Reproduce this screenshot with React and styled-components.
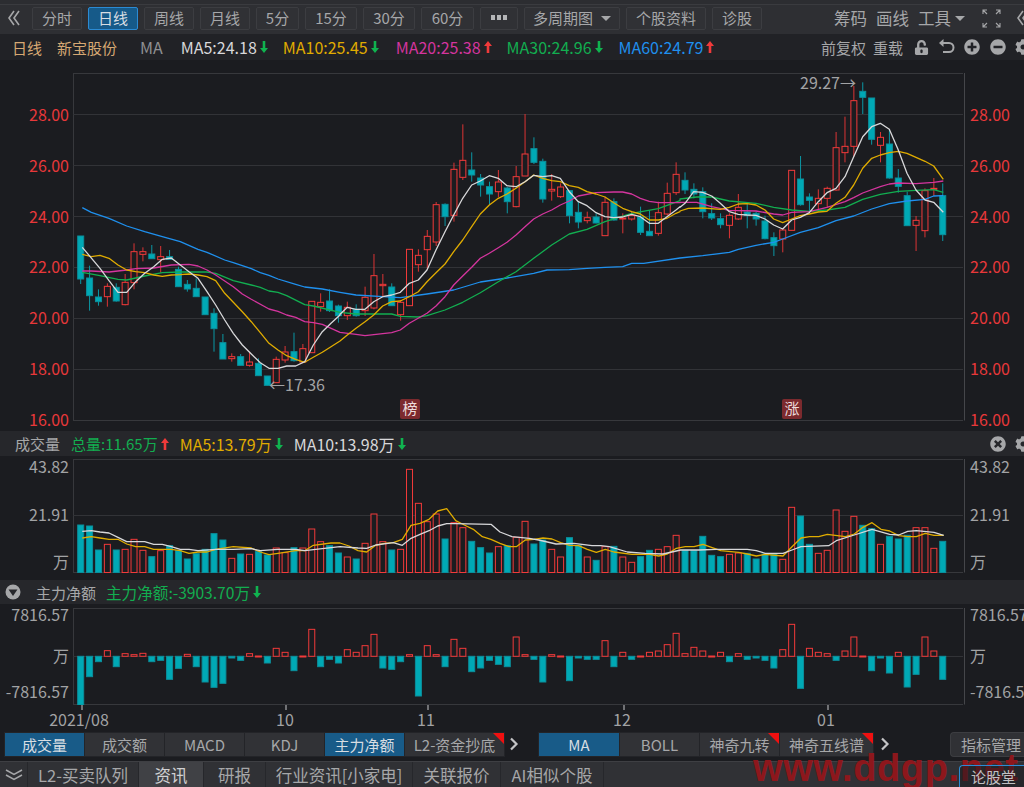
import React from 'react';
import styled, { createGlobalStyle } from 'styled-components';
import { FaCog, FaPlusCircle, FaMinusCircle, FaTimesCircle, FaUnlockAlt } from 'react-icons/fa';

const FONT = '"Noto Sans CJK SC", "Noto Sans", sans-serif';
const RED = '#f23a3a';
const TEAL = '#00a9b5';
const C = { ma5: '#d8d8da', ma10: '#e0ac00', ma20: '#d4359e', ma30: '#12ae50', ma60: '#1f90ee' };

const Global = createGlobalStyle`
  html, body { margin: 0; padding: 0; background: #1b1c20; overflow: hidden; }
  * { box-sizing: border-box; }
`;

const Page = styled.div`
  position: relative; width: 1024px; height: 787px; overflow: hidden;
  display: flex; flex-direction: column; background: #1b1c20;
  font-family: ${FONT}; font-size: 15px; color: #a6a7a9;
`;
const TopStrip = styled.div`height: 5px; background: #2c2d31; border-bottom: 1px solid #3a3b3f;`;
const Toolbar = styled.div`
  height: 29px; background: #2e2f33; display: flex; align-items: center; gap: 6px; padding: 0 0 3px 8px;
`;
const Chevrons = styled.svg`flex: none; display: block;`;
const BackChevron = styled.span`display: flex; margin-right: 6px;`;
const ToolButton = styled.button`
  flex: none; height: 23px; width: ${p => p.$w}px; padding: 0; font: inherit; line-height: 20px;
  display: flex; align-items: center; justify-content: center; gap: 8px;
  color: ${p => (p.$active ? '#d7dde2' : '#a6a7a9')};
  background: ${p => (p.$active ? '#165a89' : '#303135')};
  border: 1px solid ${p => (p.$active ? '#2b8bd4' : '#3c3d41')};
  border-radius: 2px;
`;
const Caret = styled.span`
  width: 0; height: 0; border-left: 5px solid transparent; border-right: 5px solid transparent;
  border-top: 5px solid #a6a7a9;
`;
const ToolRight = styled.div`
  margin-left: auto; display: flex; align-items: center; gap: 9px; font-size: 16.5px;
`;
const ToolLink = styled.span`display: flex; align-items: center; gap: 4px;`;
const FullSlot = styled.span`margin-left: 8px; display: flex;`;
const CutChevron = styled.span`margin-left: 7px; display: flex; width: 7px; overflow: hidden;`;
const Legend = styled.div`
  height: 26px; background: #212226; display: flex; align-items: center; padding-left: 12px; white-space: nowrap;
`;
const Tag = styled.span`
  color: ${p => p.$c}; margin-left: ${p => p.$ml || 0}px; flex: none; font-size: ${p => p.$fs || 15}px;
  display: inline-flex; align-items: center; gap: 3px;
`;
const LegendRight = styled.div`margin-left: auto; display: flex; align-items: center; color: #a6a7a9; width: 203px;`;
const LegendLink = styled.span`margin-left: ${p => p.$ml || 0}px;`;
const IconSlot = styled.span`
  display: inline-flex; margin-left: ${p => p.$ml}px; color: #a6a7a9; font-size: ${p => p.$s || 16}px;
`;
const PlotRow = styled.div`display: flex; height: ${p => p.$h}px; flex: none;`;
const Axis = styled.div`
  width: ${p => p.$w}px; flex: none; display: grid; grid-template-rows: ${p => p.$rows};
  padding-top: ${p => p.$top}px; font-size: 16px; line-height: 20px; white-space: nowrap;
  color: ${p => p.$c || '#a2a3a5'}; text-align: ${p => (p.$left ? 'right' : 'left')};
  padding-left: ${p => (p.$left ? 0 : 5)}px; padding-right: ${p => (p.$left ? 4 : 0)}px;
`;
const Plot = styled.svg`flex: none; display: block; overflow: hidden;`;
const XAxisSvg = styled.svg`flex: none; display: block;`;
const SubHeader = styled.div`
  height: ${p => p.$h}px; flex: none; margin-top: ${p => p.$mt || 0}px; background: #26272b;
  display: flex; align-items: center; padding-left: ${p => p.$pl}px; white-space: nowrap;
`;
const SubRight = styled.div`margin-left: auto; display: flex; align-items: center; width: 34px;`;
const TabRow = styled.div`height: 26px; flex: none; display: flex; align-items: center; padding-left: 4px;`;
const TabGroup = styled.div`
  display: flex; height: 25px; background: #232428; border: 1px solid #232428; gap: 1px;
  margin-left: ${p => p.$ml || 0}px; flex: none;
`;
const Tab = styled.div`
  position: relative; width: ${p => p.$w}px; display: flex; align-items: center; justify-content: center;
  background: ${p => (p.$active ? '#185b88' : '#313236')}; color: ${p => (p.$active ? '#d7dde2' : '#a6a7a9')};
  ${p => p.$flag && `&::after {
    content: ''; position: absolute; top: 0; right: 0; width: 0; height: 0;
    border-top: 11px solid #f01010; border-left: 11px solid transparent;
  }`}
`;
const Manage = styled.div`
  margin-left: auto; width: 74px; height: 25px; display: flex; align-items: center; padding-left: 10px;
  background: #303135; border: 1px solid #3c3d41; border-right: none; border-radius: 4px 0 0 4px; white-space: nowrap;
`;
const Bottom = styled.div`
  margin-top: 4px; height: 26px; flex: none; background: #303135; border-top: 1px solid #3e3f43;
  display: flex; align-items: stretch; font-size: 16.5px;
`;
const BotItem = styled.div`
  width: ${p => p.$w}px; flex: none; display: flex; align-items: center; justify-content: center;
  border-right: 1px solid #26272b; white-space: nowrap;
  background: ${p => (p.$active ? '#404145' : 'transparent')};
  color: ${p => (p.$active ? '#d0d0d2' : '#a6a7a9')};
`;
const Forum = styled.div`
  position: relative; z-index: 2;
  margin-left: auto; margin-top: 3px; width: 65px; display: flex; align-items: center; padding-left: 11px;
  border: 1px solid #2b8bd4; border-right: none; border-bottom: none; border-radius: 4px 0 0 0;
  background: rgba(26, 27, 31, 0.5); color: #c0c0c2; font-size: 15px;
`;
const Watermark = styled.div`
  position: absolute; z-index: 1; left: 753px; top: 746px; font: bold 38px/44px "Liberation Sans", sans-serif;
  letter-spacing: 0.6px; color: #8d171c; white-space: nowrap; pointer-events: none;
`;
const AxisText = styled.text`fill: #a2a3a5; font-size: 16px; font-family: ${FONT}; text-anchor: middle;`;
const NoteText = styled.text`fill: #a2a3a5; font-size: 16px; font-family: ${FONT};`;
const BadgeText = styled.text`fill: #ecdcdc; font-size: 15px; font-family: ${FONT}; text-anchor: middle;`;
const Wire = styled.polyline`fill: none; stroke-width: 1.3; stroke-linejoin: round;`;

const Up = () => (
  <svg width="8" height="12" viewBox="0 0 8 12"><path d="M4 0 8 5H5.3V12H2.7V5H0Z" fill="#f03a3a" /></svg>
);
const Down = () => (
  <svg width="8" height="12" viewBox="0 0 8 12"><path d="M4 12 8 7H5.3V0H2.7V7H0Z" fill="#10b34f" /></svg>
);

const CX = i => 80.7 + 8.887 * i;

const parse = (s, ox, oy) => s.trim().split(/\s+/).map(p => {
  const [x, y] = p.split(',').map(Number);
  return `${(x / 3 + ox).toFixed(1)},${(y / 3 + oy).toFixed(1)}`;
}).join(' ');

/* [type, bodyTop, bodyBottom, wickTop, wickBottom] in 3x crop rows, offset 70 */
const candles = `c 498 627 498 642;c 624 677 587 722;c 681 695 658 707;r 649 680 640 710;c 652 693 640 695;r 637 704 612 706;r 545 638 520 658;r 545 553 532 574;c 552 566 525 566;r 560 569 528 608;c 560 568 540 568;c 598 650 590 650;c 643 657 630 665;c 655 680 625 680;c 681 734 681 734;c 730 776 715 845;c 818 867 792 867;r 860 866 850 875;c 860 886 852 886;r 876 886 845 890;c 880 917 865 917;c 918 946 918 946;r 868 938 860 938;r 846 870 828 878;c 845 872 788 875;r 836 876 822 880;r 694 848 694 848;r 697 710 670 725;c 693 722 658 726;c 708 737 704 758;r 712 737 695 750;c 718 737 703 740;r 682 722 650 738;r 617 714 552 718;r 643 647 612 680;c 651 707 640 707;r 697 734 690 752;r 538 707 538 707;r 556 584 538 605;r 499 539 480 595;r 404 516 396 528;c 403 440 400 468;r 298 436 278 455;r 271 322 163 330;c 300 315 247 335;c 324 345 312 380;c 350 372 335 405;r 336 365 300 382;c 354 395 350 430;r 320 410 288 412;r 252 318 132 318;c 236 277 202 282;c 274 387 266 398;r 358 363 312 392;r 351 380 340 384;c 362 437 362 460;c 427 456 395 475;r 443 452 425 460;c 441 459 430 460;r 397 497 380 497;c 395 450 385 452;r 444 447 430 490;r 437 447 425 452;c 441 487 410 495;c 484 497 420 497;r 428 490 395 497;r 370 432 338 436;r 313 368 277 375;c 331 360 307 372;c 358 372 340 385;c 365 425 352 445;c 431 444 400 450;c 446 464 430 475;r 436 466 430 505;r 412 447 372 450;c 426 436 402 475;c 430 447 425 467;c 453 506 437 508;c 503 527 487 558;r 480 507 478 547;r 301 481 301 481;c 327 404 258 407;c 381 391 370 425;r 385 401 358 425;r 355 385 350 412;r 233 360 186 362;r 229 248 140 277;r 92 229 48 260;c 64 82 37 132;c 84 208 84 224;r 202 226 186 277;c 222 324 180 326;c 324 349 297 368;c 377 467 365 467;r 451 466 438 543;r 362 482 355 502;r 355 358 324 378;c 377 494 340 513`
  .split(';').map(s => { const a = s.split(' '); return [a[0], ...a.slice(1).map(v => 70 + Number(v) / 3)]; });

const mainLine = (a, b, c) => `${parse(a, 0, 70)} ${parse(b, 340, 70)} ${parse(c, 680, 70)}`;

const lines = [
  [C.ma60, mainLine(
    '247,413 274,427 327,445 380,468 434,485 487,500 541,515 594,538 621,547 674,570 700,578 754,596 781,608 807,616 834,627 887,643 914,651 967,657 1020,667',
    '0,667 48,675 128,680 181,683 261,672 341,660 421,636 501,624 581,610 621,600 688,599 741,595 795,592 848,590 875,580 911,580 1020,564',
    '0,564 68,557 148,547 175,538 228,526 281,517 308,507 361,487 415,473 468,452 521,438 575,417 628,401 681,393 735,388 761,378 790,377')],
  [C.ma30, mainLine(
    '247,607 300,617 354,628 380,630 434,618 487,608 541,606 621,606 647,610 700,632 754,645 781,652 807,663 834,667 860,677 914,704 940,708 1020,727',
    '0,727 48,732 155,732 181,739 235,741 261,737 315,720 368,697 421,668 475,635 528,605 581,565 635,525 688,492 741,478 795,455 875,430 955,416 1020,392',
    '0,387 50,381 95,381 148,393 228,400 281,412 335,420 388,424 441,420 495,412 548,388 601,373 655,364 708,361 761,359 790,367')],
  [C.ma20, mainLine(
    '247,603 274,603 327,606 380,600 407,596 461,594 514,585 567,583 594,588 621,600 647,615 674,633 700,650 727,672 754,688 807,717 834,724 860,735 887,742 914,755 940,758 967,763 1020,787',
    '0,787 48,793 75,797 128,791 155,788 181,780 208,760 261,730 288,708 315,680 341,645 368,618 395,592 421,565 448,550 475,533 501,517 528,495 555,470 581,447 608,432 635,420 661,405 688,393 715,378 768,368 821,366 848,366 875,372 901,385 928,394 955,398 1020,398',
    '0,397 50,397 95,410 148,421 228,423 281,432 308,435 335,427 388,425 441,412 495,395 521,383 548,369 601,350 628,342 655,339 708,341 761,337 790,333')],
  [C.ma10, mainLine(
    '247,553 274,560 300,556 327,565 354,585 380,600 407,605 434,608 461,615 487,619 514,615 541,614 567,612 594,615 621,620 647,632 674,670 700,697 727,725 754,755 781,788 807,820 834,840 860,857 887,868 914,877 940,862 967,847 993,830 1020,813',
    '0,813 22,795 48,775 75,755 101,735 128,708 155,695 181,693 208,680 235,665 261,635 288,608 315,582 341,545 368,510 395,470 421,432 448,405 475,385 501,372 528,355 555,335 581,315 608,325 635,332 661,335 688,347 715,352 741,365 768,372 795,381 821,398 848,415 875,425 901,432 928,450 955,450 981,445 1008,430 1020,425',
    '0,423 25,415 68,414 121,418 148,412 175,402 201,401 228,405 255,420 281,447 308,458 335,447 361,437 388,432 415,426 441,424 468,400 495,382 521,345 548,295 575,265 601,255 628,248 655,244 681,250 708,262 735,274 761,288 790,328')],
  [C.ma5, mainLine(
    '247,532 300,595 327,632 354,667 380,667 407,635 434,610 461,590 487,568 514,564 541,585 567,605 594,625 621,665 647,705 674,750 700,790 727,825 754,852 781,878 807,895 834,895 860,888 887,888 914,875 940,825 967,785 993,760 1020,735',
    '0,733 22,712 48,718 75,718 101,695 128,680 155,675 181,667 208,640 235,630 261,600 288,540 315,485 341,435 368,385 395,345 421,333 448,317 475,325 501,347 528,350 555,335 581,316 608,320 635,317 661,325 688,365 715,395 741,407 768,428 795,440 821,443 848,441 875,433 901,440 928,460 955,460 981,440 1008,420 1020,410',
    '0,412 15,400 41,365 68,367 95,378 121,400 148,425 175,433 201,435 228,436 255,447 281,465 308,477 335,450 361,442 388,428 415,395 441,368 468,355 495,320 521,260 548,200 575,170 601,160 628,178 655,240 681,310 708,360 735,390 761,397 790,427')],
];

const volume = `c285 c288 c360 r343 c360 r358 r328 r361 c380 r362 c347 c362 c387 c371 c358 c311 c330 r385 c372 r373 c365 c375 r354 r368 c353 r354 r297 r335 c347 c369 r381 c387 r340 r252 r335 c360 r358 r118 r220 r275 r252 c327 r278 r293 c334 c353 c369 r350 c347 r322 r274 c342 c330 r358 r381 c323 c347 r381 c391 r350 c349 r381 r397 c380 c361 r358 r350 r316 c361 c362 c319 c376 c380 r373 r369 c370 c387 c372 c372 r388 r232 c258 c343 r370 r361 r240 r304 r259 c286 c296 r343 c319 c327 c316 r293 r293 r355 c334`
  .split(' ').map(s => [s[0], 430 + Number(s.slice(1)) / 3]);
const money = `c375 c290 c245 r212 c260 r221 r224 r220 c245 c241 c298 c265 r223 c260 c306 c322 c310 c234 c241 r221 r228 c249 r205 r217 c272 r228 r148 c260 c238 c249 r209 r217 r197 r163 c264 c268 c245 r224 c348 r197 r224 c260 r178 r205 c275 c264 c241 c253 c260 r171 r224 c238 c306 r224 r228 c302 c234 c238 c238 r182 c260 r217 c238 r228 r217 r213 r194 r160 r221 r202 r213 r228 r217 c245 r221 c238 c234 c241 c264 r209 r133 c325 r205 r217 r221 c241 r213 r171 r228 c272 c234 c279 r217 c321 c283 r171 r213 c298`
  .split(' ').map(s => [s[0], 580 + Number(s.slice(1)) / 3]);

const volWhite = `${parse('247,304 274,302 300,306 327,309 354,322 380,335 434,335 461,343 487,343 514,350 541,358 567,358 594,362 647,358 700,358 754,356 781,362 834,358 887,358 914,362 967,356 1020,350 1074,354 1100,355 1127,345 1180,338 1207,346 1233,325 1260,313 1287,302 1313,288 1340,281 1367,281 1473,283 1500,306 1536,320', 0, 430)} ${parse('0,320 52,325 80,330 132,342 186,340 240,347 266,347 292,350 346,366 400,370 453,372 506,360 560,360 613,358 706,358 733,362 760,370 813,370 840,360 867,350 950,347 973,332 1027,315 1080,298 1133,313 1160,315 1187,304 1213,302 1266,307 1295,316', 512, 430)}`;
const volYellow = `${parse('247,324 274,320 300,324 327,328 354,328 380,342 407,350 434,350 461,358 487,358 514,358 541,362 567,370 594,366 621,366 647,358 700,350 754,354 781,366 807,374 834,370 887,362 914,362 940,346 993,339 1020,339 1047,348 1074,362 1100,366 1127,346 1153,340 1180,338 1207,328 1233,286 1260,280 1287,268 1313,243 1340,236 1367,272 1393,285 1420,298 1447,320 1473,328 1500,340 1527,350 1536,350', 0, 430)} ${parse('0,350 13,350 40,330 66,328 93,324 120,327 146,338 173,346 200,347 226,358 253,367 280,358 306,366 360,373 413,373 440,378 466,372 493,355 520,350 546,350 573,343 626,362 680,367 706,372 733,378 760,373 813,378 840,350 867,324 893,320 920,320 946,313 1000,320 1027,312 1053,292 1080,278 1107,298 1133,303 1160,317 1187,320 1213,320 1240,310 1266,316 1295,316', 512, 430)}`;

const GRID = '#323337';
const FRAME = '#37383c';

const Frame = ({ top, bottom, rows }) => (
  <g>
    <line x1="73.5" x2="73.5" y1={top} y2={bottom} stroke={FRAME} />
    <line x1="73" x2="963" y1={top + 0.5} y2={top + 0.5} stroke={FRAME} />
    <line x1="964.5" x2="964.5" y1={top} y2={bottom} stroke="#45464a" />
    {rows.map(y => <line key={y} x1="73" x2="963" y1={y} y2={y} stroke={GRID} />)}
    <line x1="73" x2="963" y1={bottom} y2={bottom} stroke={FRAME} />
  </g>
);

const Box = ({ i, top, bot, red }) => (
  <rect x={CX(i) - 3} y={top} width="6" height={Math.max(bot - top, 1)}
    fill={red ? '#1b1c20' : TEAL} stroke={red ? RED : '#0b8f9c'} strokeWidth="1" />
);

const Badge = ({ x, ch }) => (
  <g>
    <rect x={x} y="399" width="20" height="20" rx="2" fill="#7c2a2e" />
    <BadgeText x={x + 10} y="414">{ch}</BadgeText>
  </g>
);

const MainPlot = () => (
  <Plot width="892" height="370" viewBox="73 60 892 370">
    <Frame top={73} bottom={420.5} rows={[114.5, 165.5, 216.5, 267.5, 318.5, 369.5]} />
    {candles.map(([t, bt, bb, wt, wb], i) => (
      <g key={i}>
        <line x1={CX(i)} x2={CX(i)} y1={wt} y2={wb} stroke={t === 'r' ? '#dc3434' : '#0b97a4'} strokeWidth="1" />
        <Box i={i} top={bt} bot={bb} red={t === 'r'} />
      </g>
    ))}
    {lines.map(([c, pts]) => <Wire key={c} points={pts} stroke={c} />)}
    <NoteText x="269" y="391">←17.36</NoteText>
    <NoteText x="800" y="89">29.27→</NoteText>
    <Badge x={400} ch="榜" />
    <Badge x={782} ch="涨" />
  </Plot>
);

const VolPlot = () => (
  <Plot width="892" height="124" viewBox="73 456 892 124">
    <Frame top={459} bottom={572.5} rows={[515.5]} />
    {volume.map(([t, y], i) => <Box key={i} i={i} top={y} bot={572.5} red={t === 'r'} />)}
    <Wire points={volYellow} stroke={C.ma10} />
    <Wire points={volWhite} stroke={C.ma5} />
  </Plot>
);

const MoneyPlot = () => (
  <Plot width="892" height="101" viewBox="73 604 892 101">
    <Frame top={608} bottom={704.5} rows={[656.5]} />
    {money.map(([t, y], i) => {
      const base = 656.3;
      return <Box key={i} i={i} top={Math.min(y, base)} bot={Math.max(y, base)} red={t === 'r'} />;
    })}
  </Plot>
);

const XAxis = () => (
  <XAxisSvg width="1024" height="26" viewBox="0 705 1024 26">
    {[82, 286, 428, 624, 828].map(x => <line key={x} x1={x} x2={x} y1="704" y2="710" stroke="#c8c8ca" />)}
    <AxisText x="79" y="726">2021/08</AxisText>
    <AxisText x="285" y="726">10</AxisText>
    <AxisText x="426" y="726">11</AxisText>
    <AxisText x="622" y="726">12</AxisText>
    <AxisText x="826" y="726">01</AxisText>
  </XAxisSvg>
);

const ChevLeft = () => (
  <Chevrons width="12" height="16" viewBox="0 0 12 16">
    <path d="M6 1 1 8l5 7M11 1 6 8l5 7" fill="none" stroke="#a6a7a9" strokeWidth="1.6" />
  </Chevrons>
);
const ChevRight = ({ ml }) => (
  <Chevrons width="10" height="14" viewBox="0 0 10 14" style={{ marginLeft: ml }}>
    <path d="M2 1.5 7.5 7 2 12.5" fill="none" stroke="#c4c4c6" strokeWidth="2.2" />
  </Chevrons>
);
const ChevDown = () => (
  <Chevrons width="18" height="14" viewBox="0 0 18 14">
    <path d="M1 2l8 4.5L17 2M1 7l8 4.5L17 7" fill="none" stroke="#a6a7a9" strokeWidth="1.5" />
  </Chevrons>
);
const Dots = () => (
  <svg width="16" height="6" viewBox="0 0 16 6">
    <path d="M0 0h4v5H0ZM6 0h4v5H6ZM12 0h4v5h-4Z" fill="#b4b5b7" />
  </svg>
);
const FullScreen = () => (
  <svg width="19" height="19" viewBox="0 0 19 19">
    <path d="M1 5V1h4M1 1l4 4M14 1h4v4M18 1l-4 4M1 14v4h4M1 18l4-4M18 14v4h-4M18 18l-4-4" fill="none" stroke="#a6a7a9" strokeWidth="1.1" />
  </svg>
);
const UndoIcon = () => (
  <svg width="16" height="16" viewBox="0 0 16 16">
    <path d="M3 4h7a4.4 4.4 0 0 1 0 9H4" fill="none" stroke="#a6a7a9" strokeWidth="2" />
    <path d="M0 4 4.5 0v8Z" fill="#a6a7a9" />
  </svg>
);
const CircleDown = () => (
  <svg width="16" height="16" viewBox="0 0 16 16">
    <circle cx="8" cy="8" r="7.5" fill="#a6a7a9" />
    <path d="M3.5 5.5h9L8 12Z" fill="#26272b" />
  </svg>
);

const PRICES = ['28.00', '26.00', '24.00', '22.00', '20.00', '18.00', '16.00'];

export default function App() {
  return (
    <Page>
      <Global />
      <TopStrip />
      <Toolbar>
        <BackChevron><ChevLeft /></BackChevron>
        <ToolButton $w={50}>分时</ToolButton>
        <ToolButton $w={50} $active>日线</ToolButton>
        <ToolButton $w={50}>周线</ToolButton>
        <ToolButton $w={50}>月线</ToolButton>
        <ToolButton $w={43}>5分</ToolButton>
        <ToolButton $w={52}>15分</ToolButton>
        <ToolButton $w={52}>30分</ToolButton>
        <ToolButton $w={53}>60分</ToolButton>
        <ToolButton $w={38}><Dots /></ToolButton>
        <ToolButton $w={96}>多周期图<Caret /></ToolButton>
        <ToolButton $w={80}>个股资料</ToolButton>
        <ToolButton $w={50}>诊股</ToolButton>
        <ToolRight>
          <ToolLink>筹码</ToolLink>
          <ToolLink>画线</ToolLink>
          <ToolLink>工具<Caret /></ToolLink>
          <FullSlot><FullScreen /></FullSlot>
          <CutChevron><ChevLeft /></CutChevron>
        </ToolRight>
      </Toolbar>
      <Legend>
        <Tag $c="#d6a873">日线</Tag>
        <Tag $c="#d6a873" $ml={15}>新宝股份</Tag>
        <Tag $c="#8f9092" $ml={23} $fs={16}>MA</Tag>
        <Tag $c={C.ma5} $ml={18} $fs={16}>MA5:24.18<Down /></Tag>
        <Tag $c={C.ma10} $ml={15} $fs={16}>MA10:25.45<Down /></Tag>
        <Tag $c={C.ma20} $ml={17} $fs={16}>MA20:25.38<Up /></Tag>
        <Tag $c={C.ma30} $ml={15} $fs={16}>MA30:24.96<Down /></Tag>
        <Tag $c={C.ma60} $ml={16} $fs={16}>MA60:24.79<Up /></Tag>
        <LegendRight>
          <LegendLink>前复权</LegendLink>
          <LegendLink $ml={7}>重载</LegendLink>
          <IconSlot $ml={11} $s={15}><FaUnlockAlt /></IconSlot>
          <IconSlot $ml={10}><UndoIcon /></IconSlot>
          <IconSlot $ml={9}><FaPlusCircle /></IconSlot>
          <IconSlot $ml={10}><FaMinusCircle /></IconSlot>
          <IconSlot $ml={9}><FaCog /></IconSlot>
        </LegendRight>
      </Legend>
      <PlotRow $h={370}>
        <Axis $left $w={73} $c="#e8383a" $top={44} $rows="repeat(7, 50.83px)">
          {PRICES.map(p => <span key={p}>{p}</span>)}
        </Axis>
        <MainPlot />
        <Axis $w={59} $c="#e8383a" $top={44} $rows="repeat(7, 50.83px)">
          {PRICES.map(p => <span key={p}>{p}</span>)}
        </Axis>
      </PlotRow>
      <SubHeader $h={25} $mt={1} $pl={15}>
        <Tag $c="#a6a7a9">成交量</Tag>
        <Tag $c={C.ma30} $ml={11}>总量:11.65万<Up /></Tag>
        <Tag $c={C.ma10} $ml={11} $fs={16}>MA5:13.79万<Down /></Tag>
        <Tag $c={C.ma5} $ml={11} $fs={16}>MA10:13.98万<Down /></Tag>
        <SubRight>
          <IconSlot $ml={0}><FaTimesCircle /></IconSlot>
          <IconSlot $ml={9}><FaCog /></IconSlot>
        </SubRight>
      </SubHeader>
      <PlotRow $h={124}>
        <Axis $left $w={73} $top={0} $rows="48px 47px 20px">
          <span>43.82</span><span>21.91</span><span>万</span>
        </Axis>
        <VolPlot />
        <Axis $w={59} $top={0} $rows="48px 47px 20px">
          <span>43.82</span><span>21.91</span><span>万</span>
        </Axis>
      </PlotRow>
      <SubHeader $h={24} $pl={5}>
        <CircleDown />
        <Tag $c="#a6a7a9" $ml={15}>主力净额</Tag>
        <Tag $c={C.ma30} $ml={10} $fs={15.6}>主力净额:-3903.70万<Down /></Tag>
        <SubRight />
      </SubHeader>
      <PlotRow $h={101}>
        <Axis $left $w={73} $top={0} $rows="41px 36px 20px">
          <span>7816.57</span><span>万</span><span>-7816.57</span>
        </Axis>
        <MoneyPlot />
        <Axis $w={59} $top={0} $rows="41px 36px 20px">
          <span>7816.57</span><span>万</span><span>-7816.57</span>
        </Axis>
      </PlotRow>
      <XAxis />
      <TabRow>
        <TabGroup>
          <Tab $w={79} $active>成交量</Tab>
          <Tab $w={79}>成交额</Tab>
          <Tab $w={79}>MACD</Tab>
          <Tab $w={79}>KDJ</Tab>
          <Tab $w={79} $active>主力净额</Tab>
          <Tab $w={99} $flag>L2-资金抄底</Tab>
        </TabGroup>
        <ChevRight ml={4} />
        <TabGroup $ml={19}>
          <Tab $w={80} $active>MA</Tab>
          <Tab $w={79}>BOLL</Tab>
          <Tab $w={79} $flag>神奇九转</Tab>
          <Tab $w={93} $flag>神奇五线谱</Tab>
        </TabGroup>
        <ChevRight ml={6} />
        <Manage>指标管理</Manage>
      </TabRow>
      <Bottom>
        <BotItem $w={28}><ChevDown /></BotItem>
        <BotItem $w={111}>L2-买卖队列</BotItem>
        <BotItem $w={65} $active>资讯</BotItem>
        <BotItem $w={62}>研报</BotItem>
        <BotItem $w={147}>行业资讯[小家电]</BotItem>
        <BotItem $w={88}>关联报价</BotItem>
        <BotItem $w={103}>AI相似个股</BotItem>
        <Forum>论股堂</Forum>
      </Bottom>
      <Watermark>www.ddgp.net</Watermark>
    </Page>
  );
}
